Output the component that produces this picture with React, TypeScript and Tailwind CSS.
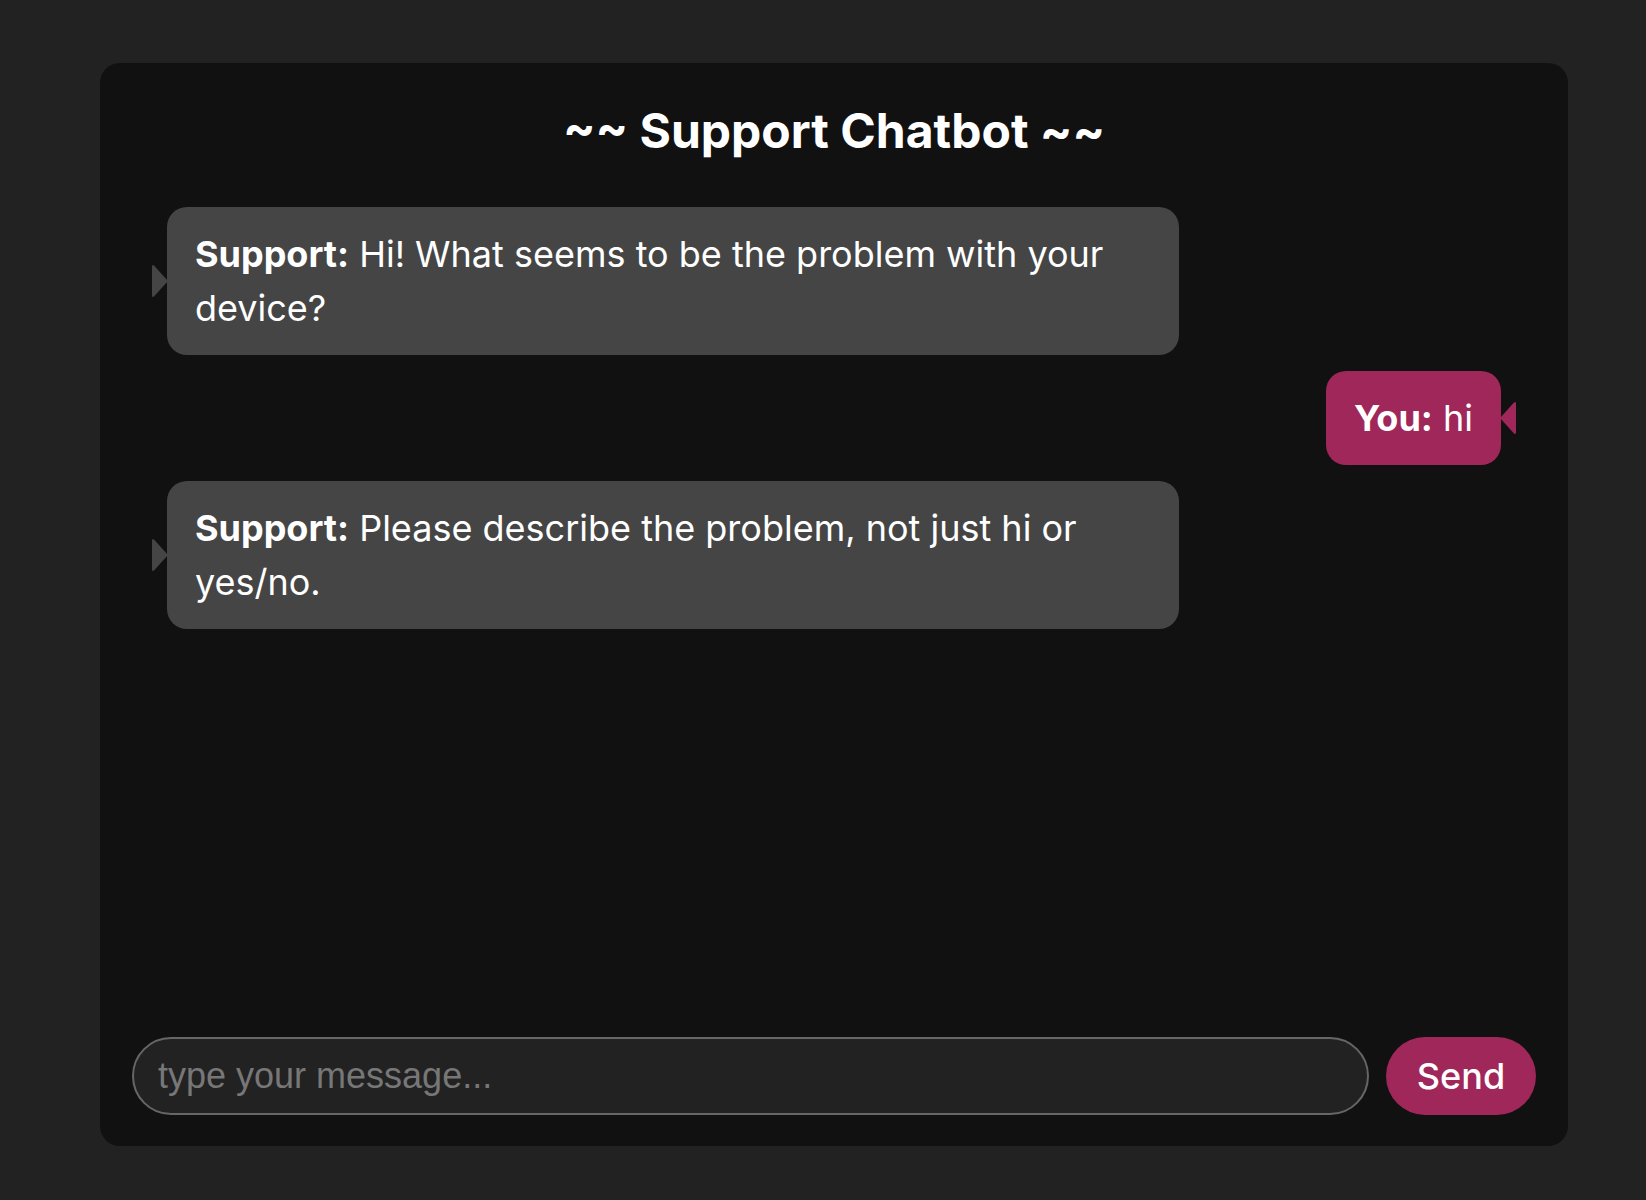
import React from "react";

function Tail({ side, color }: { side: "left" | "right"; color: string }) {
  return (
    <svg
      width="16"
      height="34"
      viewBox="0 0 16 34"
      className={side === "left" ? "absolute left-[-15px] top-1/2 -translate-y-1/2" : "absolute right-[-15px] top-1/2 -translate-y-1/2"}
    >
      {side === "left" ? (
        <path d="M16 17 L2 1.5 Q0 0 0 3 L0 31 Q0 34 2 32.5 Z" fill={color} />
      ) : (
        <path d="M0 17 L14 1.5 Q16 0 16 3 L16 31 Q16 34 14 32.5 Z" fill={color} />
      )}
    </svg>
  );
}

function SupportMsg({ text }: { text: string }) {
  return (
    <div className="relative self-start w-[1012px] rounded-[20px] bg-[#454545] px-7 py-5 text-[36px] leading-[54px] text-white">
      <Tail side="left" color="#454545" />
      <span className="font-bold">Support:</span> {text}
    </div>
  );
}

function UserMsg({ text }: { text: string }) {
  return (
    <div className="relative self-end rounded-[20px] bg-[#a02759] px-7 py-5 text-[36px] leading-[54px] text-white">
      <Tail side="right" color="#a02759" />
      <span className="font-bold">You:</span> {text}
    </div>
  );
}

export default function App() {
  return (
    <div
      className="min-h-[1200px] w-full bg-[#222222] pt-[63px]"
      style={{ fontFamily: "Inter, 'Noto Sans', sans-serif" }}
    >
      <div className="ml-[100px] flex h-[1083px] w-[1468px] flex-col rounded-[20px] bg-[#111111] px-8 pb-[31px] pt-[40px]">
        <h1 className="text-center text-[48px] font-bold leading-[56px] text-white">
          ~~ Support Chatbot ~~
        </h1>
        <div className="mt-[48px] flex flex-col gap-4 px-[35px]">
          <SupportMsg text="Hi! What seems to be the problem with your device?" />
          <UserMsg text="hi" />
          <SupportMsg text="Please describe the problem, not just hi or yes/no." />
        </div>
        <div className="mt-auto flex gap-[17px]">
          <input
            type="text"
            placeholder="type your message..."
            className="h-[78px] flex-1 rounded-full border-2 border-[#666666] bg-[#222222] px-6 text-[36px] text-white outline-none placeholder:text-[#777777]"
            style={{ fontFamily: "'Liberation Sans', Arial, sans-serif" }}
          />
          <button className="h-[78px] w-[150px] rounded-full bg-[#a02759] text-[36px] font-medium text-white">
            Send
          </button>
        </div>
      </div>
    </div>
  );
}
